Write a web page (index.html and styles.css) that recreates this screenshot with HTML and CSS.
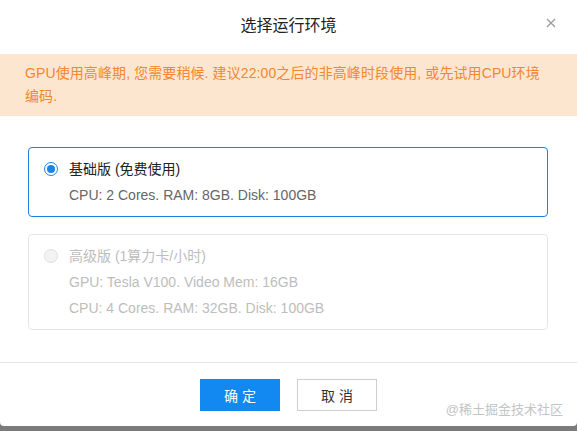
FILE: index.html
```html
<!DOCTYPE html>
<html lang="zh-CN">
<head>
  <meta charset="UTF-8">
  <title>选择运行环境</title>
  <meta name="viewport" content="width=device-width, initial-scale=1.0">
  <link rel="stylesheet" href="styles.css">
</head>
<body>

  <div class="modal">
    <div class="modal-header">
      <div class="modal-title">选择运行环境</div>
      <span class="modal-close">
        <svg width="10" height="10" viewBox="0 0 10 10">
          <path d="M1 1L9 9M9 1L1 9" stroke="#999" stroke-width="1.2" fill="none"/>
        </svg>
      </span>
    </div>

    <div class="alert">
      GPU使用高峰期, 您需要稍候. 建议22:00之后的非高峰时段使用, 或先试用CPU环境编码.
    </div>

    <div class="modal-body">
      <label class="env-card checked">
        <div class="env-title">
          <span class="radio"></span>
          <span>基础版 (免费使用)</span>
        </div>
        <div class="env-desc">CPU: 2 Cores. RAM: 8GB. Disk: 100GB</div>
      </label>

      <label class="env-card disabled">
        <div class="env-title">
          <span class="radio"></span>
          <span>高级版 (1算力卡/小时)</span>
        </div>
        <div class="env-desc">GPU: Tesla V100. Video Mem: 16GB</div>
        <div class="env-desc">CPU: 4 Cores. RAM: 32GB. Disk: 100GB</div>
      </label>
    </div>

    <div class="modal-footer">
      <button class="btn btn-primary">确 定</button>
      <button class="btn">取 消</button>
    </div>

    <div class="watermark">@稀土掘金技术社区</div>
  </div>

</body>
</html>
```

FILE: styles.css
```css
html, body {
  margin: 0; padding: 0;
  height: 100%;
  overflow: hidden;
}
body {
  background: #7b7b7b;
  font-family: "Liberation Sans", "Noto Sans CJK SC", sans-serif;
  color: #333;
}
.modal {
  position: relative;
  height: 426px;
  background: #fff;
  border-radius: 0 0 4px 4px;
  display: flex;
  flex-direction: column;
}
.modal-header {
  position: relative;
  padding: 15px 0 17px;
  text-align: center;
}
.modal-title {
  font-size: 16px;
  line-height: 22px;
  color: #222;
}
.modal-close {
  position: absolute;
  top: 18px;
  right: 21px;
  display: flex;
}
.alert {
  background: #fde6cf;
  color: #f3872f;
  font-size: 14px;
  line-height: 23px;
  letter-spacing: 0.1px;
  padding: 8px 34px 8px 25px;
}
.modal-body {
  padding: 31px 29px 32px 28px;
  display: flex;
  flex-direction: column;
  gap: 17px;
  border-bottom: 1px solid #e6e6e6;
}
.env-card {
  display: block;
  border: 1px solid #e6e6e6;
  border-radius: 4px;
  padding: 11px 16px 11px 15px;
}
.env-card.checked {
  border-color: #1f83db;
}
.env-title {
  display: flex;
  align-items: center;
  gap: 11px;
  font-size: 14px;
  line-height: 20px;
  color: #222;
}
.env-desc {
  margin-top: 6px;
  padding-left: 25px;
  font-size: 14px;
  line-height: 20px;
  color: #666;
}
.radio {
  width: 12px;
  height: 12px;
  border: 1px solid #d9d9d9;
  border-radius: 50%;
  background: #fff;
  position: relative;
}
.checked .radio {
  border-color: #1a84e8;
}
.checked .radio::after {
  content: "";
  position: absolute;
  top: 2px; left: 2px;
  width: 8px; height: 8px;
  border-radius: 50%;
  background: #1a84e8;
}
.disabled .radio {
  background: #f3f3f3;
  border-color: #e0e0e0;
}
.disabled .env-title,
.disabled .env-desc {
  color: #bdbdbd;
}
.modal-footer {
  display: flex;
  justify-content: center;
  gap: 17px;
  padding-top: 16px;
}
.btn {
  width: 80px;
  height: 32px;
  font-family: inherit;
  font-size: 14px;
  color: #333;
  background: #fff;
  border: 1px solid #cfcfcf;
  cursor: pointer;
}
.btn-primary {
  background: #1289f0;
  border-color: #1289f0;
  color: #fff;
}
.watermark {
  position: absolute;
  right: 14px;
  bottom: 8px;
  font-size: 13px;
  color: #c4c4c4;
  text-shadow: 0 0 1px #fff;
}
```
